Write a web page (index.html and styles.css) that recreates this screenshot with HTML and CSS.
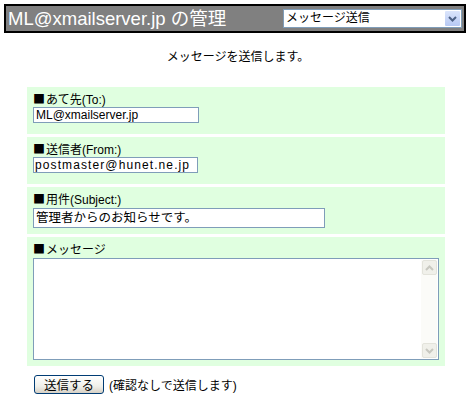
FILE: index.html
```html
<!DOCTYPE html>
<html lang="ja">
<head>
<meta charset="utf-8">
<title>ML管理</title>
<link rel="stylesheet" href="styles.css">
</head>
<body>
<div class="header">
  <h1 class="title">ML@xmailserver.jp の管理</h1>
  <div class="select">
    <span class="select-text">メッセージ送信</span>
    <span class="select-btn"><svg width="9" height="6" viewBox="0 0 9 6"><path d="M1 1 L4.5 4.5 L8 1" fill="none" stroke="#4d6185" stroke-width="2"/></svg></span>
  </div>
</div>
<p class="lead">メッセージを送信します。</p>
<div class="form">
  <div class="row">
    <div class="label"><span class="sq">■</span>あて先(To:)</div>
    <div class="field f-short">ML@xmailserver.jp</div>
  </div>
  <div class="row">
    <div class="label"><span class="sq">■</span>送信者(From:)</div>
    <div class="field f-short f-spaced">postmaster@hunet.ne.jp</div>
  </div>
  <div class="row row-subj">
    <div class="label"><span class="sq">■</span>用件(Subject:)</div>
    <div class="field f-long">管理者からのお知らせです。</div>
  </div>
  <div class="row row-msg">
    <div class="label"><span class="sq">■</span>メッセージ</div>
    <div class="textarea">
      <div class="scroll">
        <span class="sbtn"><svg width="9" height="6" viewBox="0 0 9 6"><path d="M1 5 L4.5 1.5 L8 5" fill="none" stroke="#c8c8c0" stroke-width="2"/></svg></span>
        <span class="sbtn"><svg width="9" height="6" viewBox="0 0 9 6"><path d="M1 1 L4.5 4.5 L8 1" fill="none" stroke="#c8c8c0" stroke-width="2"/></svg></span>
      </div>
    </div>
  </div>
</div>
<div class="actions">
  <span class="button">送信する</span>
  <span class="note">(確認なしで送信します)</span>
</div>
</body>
</html>
```
FILE: styles.css
```css
html, body {
  margin: 0;
  padding: 0;
  background: #fff;
}
body {
  padding: 4px;
  font-family: "Liberation Sans", "Noto Sans CJK JP", sans-serif;
  font-size: 12px;
  color: #000;
}
.header {
  width: 454px;
  height: 25px;
  border: 2px solid #000;
  background: #808080;
  display: flex;
  align-items: center;
  justify-content: space-between;
  padding: 0 2px;
  box-sizing: content-box;
}
.title {
  margin: 0;
  font-size: 18.5px;
  font-weight: normal;
  color: #fff;
  line-height: 25px;
  white-space: nowrap;
}
.select {
  width: 177px;
  height: 17px;
  border: 1px solid #7f9db9;
  background: #fff;
  display: flex;
  align-items: center;
  justify-content: space-between;
}
.select-text {
  padding-left: 2px;
  font-size: 12px;
  line-height: 17px;
}
.select-btn {
  width: 15px;
  height: 15px;
  margin-right: 1px;
  background: linear-gradient(#dbe5fb, #b7c9f4);
  border-radius: 1px;
  display: flex;
  align-items: center;
  justify-content: center;
}
.lead {
  margin: 16px 0 0 0;
  padding-left: 4px;
  text-align: center;
  line-height: 16px;
  height: 16px;
}
.form {
  margin: 22px 0 0 23px;
  width: 418px;
  display: flex;
  flex-direction: column;
  gap: 3px;
}
.row {
  background: #e0ffe0;
  padding: 4px 6px 0 6px;
  height: 43px;
}
.row-msg {
  height: 125px;
}
.label {
  line-height: 16px;
  height: 16px;
  white-space: nowrap;
}
.sq {
  font-family: "Noto Sans CJK JP", sans-serif;
  font-size: 12px;
  margin-right: 1px;
}
.field {
  height: 14px;
  border: 1px solid #7f9db9;
  background: #fff;
  padding: 0 2px;
  line-height: 14px;
  font-size: 12px;
  white-space: nowrap;
  overflow: hidden;
  box-sizing: content-box;
}
.f-short {
  width: 160px;
}
.f-spaced {
  letter-spacing: 1.1px;
  padding-left: 1px;
}
.row-subj .label {
  height: 17px;
}
.f-long {
  width: 286px;
  height: 18px;
  line-height: 18px;
  font-size: 12.5px;
}
.row-msg .label {
  height: 17px;
}
.textarea {
  width: 404px;
  height: 100px;
  border: 1px solid #7f9db9;
  background: #fff;
  position: relative;
}
.scroll {
  position: absolute;
  right: 1px;
  top: 1px;
  bottom: 1px;
  width: 16px;
  background: #fbfbf8;
  display: flex;
  flex-direction: column;
  justify-content: space-between;
}
.sbtn {
  width: 15px;
  height: 15px;
  background: #f0f0ea;
  border: 1px solid #e3e3db;
  border-radius: 2px;
  display: flex;
  align-items: center;
  justify-content: center;
  box-sizing: border-box;
  margin-left: 1px;
}
.actions {
  margin: 9px 0 0 30px;
  display: flex;
  align-items: center;
  gap: 5px;
}
.button {
  width: 68px;
  height: 17px;
  border: 1px solid #003c74;
  border-radius: 3px;
  background: linear-gradient(#ffffff, #f0f0ea 60%, #d6d0c5);
  display: flex;
  align-items: center;
  justify-content: center;
  font-size: 12.5px;
}
.note {
  font-size: 12px;
}
```
